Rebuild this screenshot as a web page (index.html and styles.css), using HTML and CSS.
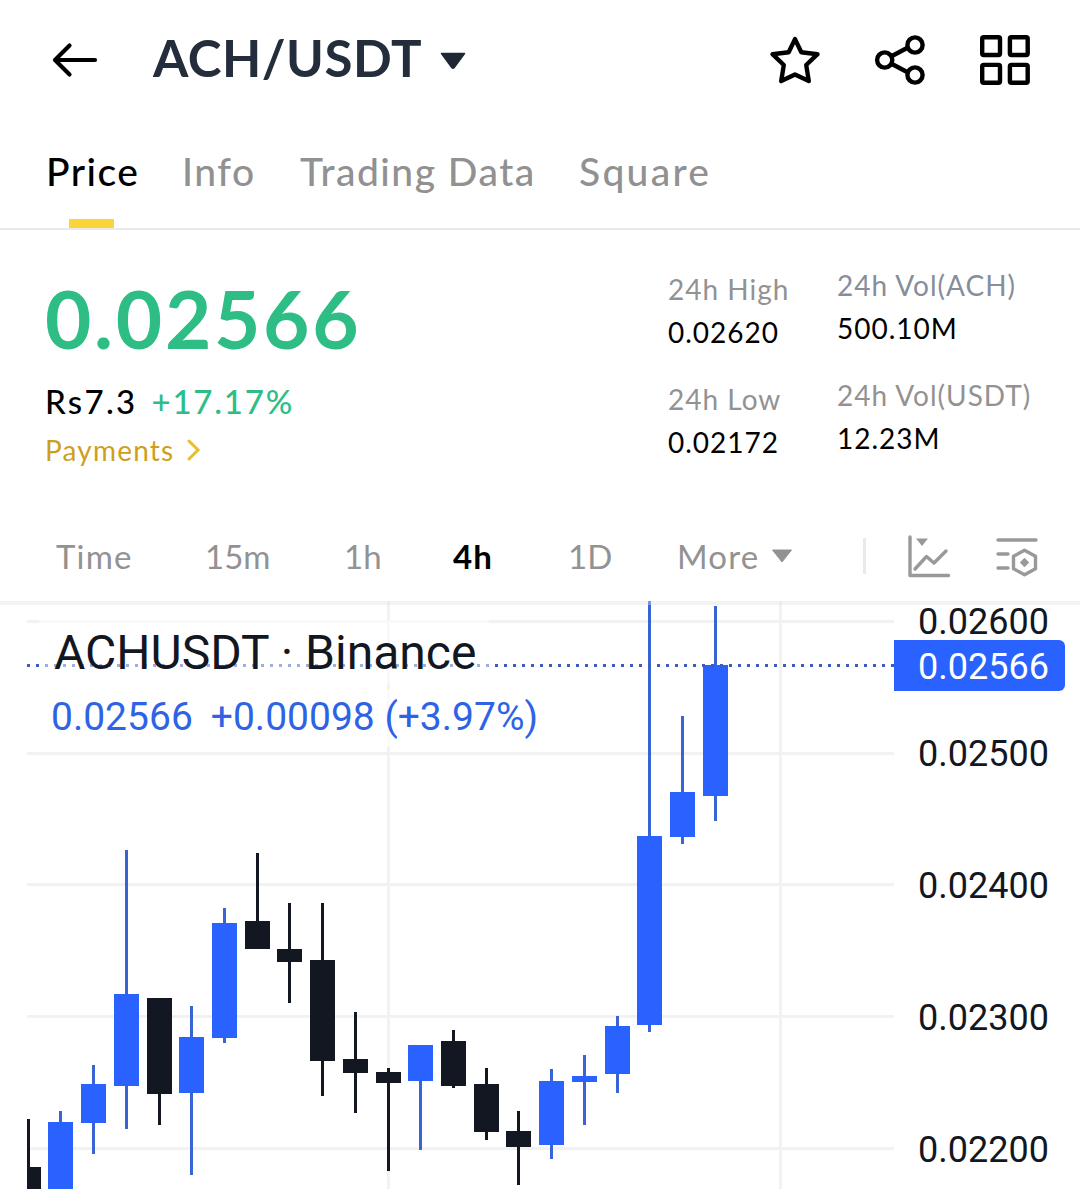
FILE: index.html
```html
<!DOCTYPE html>
<html lang="en">
<head>
<meta charset="utf-8">
<title>ACH/USDT</title>
<link rel="stylesheet" href="styles.css">
</head>
<body>
<header class="topbar">
  <svg class="back" width="48" height="40" viewBox="0 0 48 40"><path d="M44 20H4M18.500 5.500L4 20L18.500 34.500" fill="none" stroke="#000" stroke-width="4.200" stroke-linecap="round" stroke-linejoin="round"/></svg>
  <h1 class="pair"><span>ACH/USDT</span><svg width="28" height="18" viewBox="0 0 28 18"><path d="M2.500 1.500H25.500L15.200 15.500Q14 17 12.800 15.500Z" fill="#1f2733" stroke="#1f2733" stroke-width="1.500" stroke-linejoin="round"/></svg></h1>
  <nav class="actions">
    <svg width="52" height="52" viewBox="0 0 52 52"><path d="M26 5.100L32.300 18.300L48.500 20.200L37.200 31L39.800 47.100L26 40.500L12.200 47.100L14.800 31L3.500 20.200L19.700 18.300Z" fill="none" stroke="#000" stroke-width="4.400" stroke-linejoin="round"/></svg>
    <svg width="52" height="52" viewBox="0 0 52 52"><g fill="none" stroke="#000" stroke-width="4.400"><circle cx="10.700" cy="26" r="7.600"/><circle cx="41" cy="11" r="7.600"/><circle cx="41" cy="41" r="7.600"/><path d="M17.500 22.300L34 13.500M17.500 29.700L34 38.500"/></g></svg>
    <svg width="52" height="52" viewBox="0 0 52 52"><g fill="none" stroke="#000" stroke-width="4.400"><rect x="3.200" y="3.200" width="17.800" height="17.800" rx="1.500"/><rect x="30.900" y="3.200" width="17.800" height="17.800" rx="1.500"/><rect x="3.200" y="30.900" width="17.800" height="17.800" rx="1.500"/><rect x="30.900" y="30.900" width="17.800" height="17.800" rx="1.500"/></g></svg>
  </nav>
</header>
<nav class="tabs">
  <a class="tab active">Price</a>
  <a class="tab">Info</a>
  <a class="tab">Trading Data</a>
  <a class="tab square">Square</a>
</nav>
<section class="summary">
  <div class="quote">
    <div class="last">0.02566</div>
    <div class="fiat"><span>Rs7.3</span><span class="up">+17.17%</span></div>
    <div class="tag"><span>Payments</span><svg width="14" height="22" viewBox="0 0 14 22"><path d="M2 2L11 11L2 20" fill="none" stroke="#e9bd2c" stroke-width="3" stroke-linecap="round"/></svg></div>
  </div>
  <dl class="stats">
    <dt>24h High</dt><dd>0.02620</dd>
    <dt>24h Low</dt><dd>0.02172</dd>
  </dl>
  <dl class="stats volume">
    <dt class="cool">24h Vol(ACH)</dt><dd>500.10M</dd>
    <dt>24h Vol(USDT)</dt><dd>12.23M</dd>
  </dl>
</section>
<nav class="frames">
  <span class="wide">Time</span><span>15m</span><span>1h</span><span class="on wide">4h</span><span>1D</span>
  <span class="more wide">More<svg width="22" height="14" viewBox="0 0 22 14"><path d="M1.500 1H20.500L11 13Z" fill="#929292" stroke="#929292" stroke-linejoin="round"/></svg></span>
  <i class="rule"></i>
  <svg width="44" height="44" viewBox="0 0 44 44"><g fill="none" stroke="#999" stroke-width="3.400" stroke-linecap="round" stroke-linejoin="round"><path d="M2 3V41.500H40.500M7 35L18.500 22.500L26 29L38 17"/></g><path d="M8 4.500H20L14 12Z" fill="#999"/></svg>
  <svg width="44" height="44" viewBox="0 0 44 44"><g fill="none" stroke="#999" stroke-width="3.400" stroke-linecap="round" stroke-linejoin="round"><path d="M2 6H40M2 20H12M2 34H12"/><path d="M28.500 16.300L39.500 22.300V34.700L28.500 40.700L17.500 34.700V22.300Z"/></g><path d="M28.500 23.800L33.200 28.500L28.500 33.200L23.800 28.500Z" fill="#999"/></svg>
</nav>
<main class="chart">
  <svg class="plot" width="894" height="588" viewBox="0 601 894 588" shape-rendering="crispEdges">
    <path class="grid" d="M27 621.500H894M27 753.500H894M27 884.500H894M27 1016.500H894M27 1148.500H894M388.500 601V1189M780.500 601V1189"/>
    <path class="down" d="M27 1119h3v48h11v22h-14zM147 998h25v96h-11v31h-3v-31h-11zM245 921h11v-68h3v68h11v28h-25zM277 949h11v-46h3v46h11v13h-11v41h-3v-41h-11zM310 960h11v-57h3v57h11v101h-11v35h-3v-35h-11zM343 1059h11v-47h3v47h11v14h-11v40h-3v-40h-11zM376 1072h11v-4h3v4h11v11h-11v88h-3v-88h-11zM441 1041h11v-11h3v11h11v45h-11v2h-3v-2h-11zM474 1084h11v-16h3v16h11v48h-11v8h-3v-8h-11zM506 1131h11v-20h3v20h11v16h-11v38h-3v-38h-11z"/>
    <path class="wick" d="M60.500 1111V1130M93.500 1065V1154M126.500 850V1129M191.500 1006V1175M224.500 908V1043M420.500 1060V1150M551.500 1069V1159M584.500 1055V1125M617.500 1016V1093M649.500 601V1032M682.500 716V844M715.500 606V821"/>
    <path class="body" d="M48 1122h25v67h-25zM81 1084h25v39h-25zM114 994h25v92h-25zM179 1037h25v56h-25zM212 923h25v115h-25zM408 1045h25v36h-25zM539 1081h25v64h-25zM572 1076h25v6h-25zM605 1026h25v48h-25zM637 836h25v189h-25zM670 792h25v45h-25zM703 665h25v131h-25z"/>
    <path class="last-line" d="M27 665.500H894"/>
  </svg>
  <div class="axis"><span>0.02600</span><span>0.02500</span><span>0.02400</span><span>0.02300</span><span>0.02200</span></div>
  <div class="last-tag">0.02566</div>
  <div class="legend">
    <div class="symbol">ACHUSDT · Binance</div>
    <div class="change"><span>0.02566</span><span>+0.00098 (+3.97%)</span></div>
  </div>
</main>
</body>
</html>
```
FILE: styles.css
```css
* { box-sizing: border-box; }
body { margin: 0; width: 1080px; height: 1189px; overflow: hidden; background: #fff; color: #000; font-family: Lato, "Open Sans", sans-serif; }
svg { display: block; flex: none; }

.topbar { display: flex; align-items: center; height: 120px; padding: 0 49px 0 51px; }
.pair { display: flex; align-items: center; gap: 17px; margin: 0 0 5px 54px; font-size: 51px; font-weight: 700; letter-spacing: .5px; color: #242d3c; }
.pair svg { margin-top: 6px; }
.actions { display: flex; gap: 53px; margin-left: auto; }

.tabs { display: grid; grid-template-columns: 136px 118px 279px auto; height: 110px; padding-left: 46px; border-bottom: 2px solid #eaeaea; font-size: 39px; font-weight: 500; line-height: 102px; letter-spacing: 1.5px; color: #919191; white-space: nowrap; }
.tab { position: relative; }
.square { letter-spacing: 2.3px; }
.active { color: #000; }
.active::after { content: ""; position: absolute; left: 23px; bottom: 0; width: 45px; height: 9px; background: #fbd535; }

.summary { display: grid; grid-template-columns: 623px 169px auto; height: 281px; padding-left: 45px; white-space: nowrap; }
.quote { padding-top: 44px; }
.last { font-size: 80px; font-weight: 700; line-height: 88px; letter-spacing: 2.7px; color: #2ebd85; }
.fiat { display: flex; gap: 14px; margin-top: 17px; font-size: 33px; font-weight: 500; line-height: 44px; letter-spacing: 2.3px; }
.up { letter-spacing: 1.8px; color: #2ebd85; }
.tag { display: flex; align-items: center; gap: 13px; margin-top: 9px; font-size: 28px; line-height: 36px; letter-spacing: 1.2px; color: #cf9f1c; }
.stats { margin: 0; padding-top: 38px; font-size: 28px; line-height: 43px; letter-spacing: 1px; }
.volume { padding-top: 34px; }
.stats dt { color: #929292; }
.stats .cool { color: #868e9b; }
.stats dd { margin: 0 0 24px; }

.frames { display: grid; grid-template-columns: 149px 139px 109px 115px 110px 185px 45px 88px auto; align-items: center; height: 90px; padding-left: 56px; font-size: 33px; line-height: 44px; color: #929292; white-space: nowrap; }
.wide { letter-spacing: 1.2px; }
.on { font-weight: 700; color: #000; }
.more { display: flex; align-items: center; gap: 12px; margin-left: -1px; }
.rule { width: 3px; height: 36px; background: #e9e9e9; }

.chart { position: relative; display: grid; grid-template-columns: 894px 186px; height: 588px; font-family: Roboto, sans-serif; color: #131722; }
.chart::after { content: ""; position: absolute; inset: 0 0 auto; height: 4px; background: rgba(225, 225, 225, .4); }
.grid { fill: none; stroke: #000; stroke-opacity: .05; stroke-width: 3; }
.down { fill: #131722; }
.wick { fill: none; stroke: #3964d4; stroke-width: 3; }
.body { fill: #2962ff; }
.last-line { fill: none; stroke: #3d5cbd; stroke-width: 3; stroke-dasharray: 3 6; }
.axis { display: flex; flex-direction: column; margin-top: -45px; padding-left: 24px; font-size: 36px; line-height: 132px; }
.last-tag { position: absolute; left: 894px; top: 39px; width: 171px; height: 51px; padding-left: 24px; border-radius: 0 6px 6px 0; background: #2962ff; color: #fff; font-size: 36px; line-height: 54px; }
.legend { position: absolute; left: 39px; top: 19px; white-space: nowrap; }
.symbol { width: 450px; height: 64px; padding-left: 15px; background: rgba(255, 255, 255, .5); font-size: 48px; line-height: 65px; }
.change { display: flex; gap: 18px; width: 512px; height: 58px; margin-top: 5px; padding-left: 12px; background: rgba(255, 255, 255, .6); color: #2f63e6; font-size: 39px; line-height: 56px; }
```
